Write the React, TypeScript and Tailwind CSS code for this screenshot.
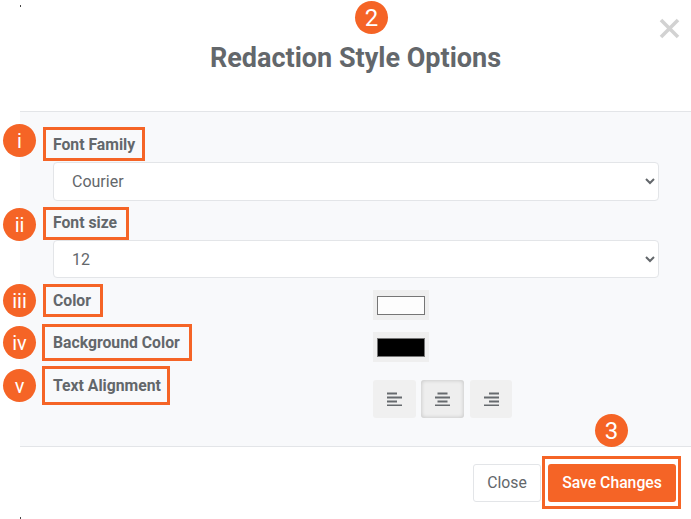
import React from "react";

function Badge({ text, className }: { text: string; className: string }) {
  return (
    <span className={"absolute flex h-[33px] w-[33px] items-center justify-center rounded-full bg-[#f56426] text-white " + className}>
      {text}
    </span>
  );
}

function AlignIcon({ lines }: { lines: [number, number][] }) {
  return (
    <svg width="15" height="14" viewBox="0 0 15 14" className="block">
      {lines.map(([x, w], i) => (
        <rect key={i} x={x} y={i * 4 + 0.5} width={w} height="2" fill="#666a6e" />
      ))}
    </svg>
  );
}

function Tick({ className }: { className: string }) {
  return <span className={"absolute h-[2px] w-[1px] bg-[#444] " + className} />;
}

export default function App() {
  return (
    <div className="relative h-[519px] w-[691px] overflow-hidden bg-white font-['Roboto',sans-serif] text-[#63676b]">
      <Tick className="left-[20px] top-[5px]" />
      <Tick className="left-[20px] top-[517px]" />

      <div className="ml-[20px]">
        {/* Header */}
        <header className="relative flex h-[112px] items-start justify-center border-b border-[#e3e5e8] pt-[41px]">
          <h1 className="text-[27px] leading-[35px] font-bold text-[#63676b]">Redaction Style Options</h1>
          <Badge text="2" className="left-[335px] top-[1px] text-[24px]" />
          <svg width="21" height="21" viewBox="0 0 21 21" className="absolute left-[639px] top-[18px]">
            <path d="M2 2 L19 19 M19 2 L2 19" stroke="#d2d2d2" strokeWidth="3.6" />
          </svg>
        </header>

        {/* Body */}
        <main className="relative h-[334px] bg-[#f8f9fb] pl-[33px] pr-[32px]">
          <div className="relative h-[50px] pt-[22px]">
            <label className="block text-[15.75px] leading-[22px] font-bold">Font Family</label>
            <span className="absolute left-[-10px] top-[15px] h-[34px] w-[102px] border-[3px] border-[#f56426]" />
            <Badge text="i" className="left-[-50px] top-[12px] text-[20px]" />
          </div>
          <select className="block h-[39px] w-[606px] rounded-[4px] border border-[#e3e5e8] bg-white pl-[14px] text-[16px] text-[#63676b]">
            <option>Courier</option>
          </select>
          <div className="relative h-[39px] pt-[11px]">
            <label className="block text-[15.75px] leading-[22px] font-bold">Font size</label>
            <span className="absolute left-[-10px] top-[6px] h-[33px] w-[86px] border-[3px] border-[#f56426]" />
            <Badge text="ii" className="left-[-50px] top-[7px] text-[20px]" />
          </div>
          <select className="block h-[38px] w-[606px] rounded-[4px] border border-[#e3e5e8] bg-white pl-[14px] text-[16px] text-[#63676b]">
            <option>12</option>
          </select>

          <div className="relative mt-[12px] flex h-[30px] items-start">
            <label className="mt-[1px] block w-[320px] text-[15.75px] leading-[20px] font-bold">Color</label>
            <div className="flex h-[30px] w-[56px] items-center justify-center bg-[#efefef]">
              <span className="block h-[19px] w-[48px] border border-[#767676] bg-[#fdfdfd]" />
            </div>
            <span className="absolute left-[-10px] top-[-6px] h-[33px] w-[60px] border-[3px] border-[#f56426]" />
            <Badge text="iii" className="left-[-50px] top-[-6px] text-[20px]" />
          </div>

          <div className="relative mt-[12px] flex h-[30px] items-start">
            <label className="mt-[1px] block w-[320px] text-[15.75px] leading-[20px] font-bold">Background Color</label>
            <div className="flex h-[30px] w-[56px] items-center justify-center bg-[#efefef]">
              <span className="block h-[19px] w-[48px] border border-[#767676] bg-black" />
            </div>
            <span className="absolute left-[-11px] top-[-8px] h-[37px] w-[150px] border-[3px] border-[#f56426]" />
            <Badge text="iv" className="left-[-50px] top-[-6px] text-[20px]" />
          </div>

          <div className="relative mt-[18px] flex items-start">
            <label className="-mt-[4px] block w-[320px] text-[15.75px] leading-[20px] font-bold">Text Alignment</label>
            <div className="flex">
              <button className="flex h-[38px] w-[43px] items-center justify-center rounded-[3px] bg-[#f0f0f0]">
                <AlignIcon lines={[[0, 10], [0, 15], [0, 10], [0, 15]]} />
              </button>
              <button className="ml-[5px] flex h-[38px] w-[43px] items-center justify-center rounded-[3px] bg-[#eeeeee] shadow-[inset_0_0_4px_rgba(0,0,0,0.2)]">
                <AlignIcon lines={[[2.5, 10], [0, 15], [2.5, 10], [0, 15]]} />
              </button>
              <button className="ml-[6px] flex h-[38px] w-[42px] items-center justify-center rounded-[3px] bg-[#f0f0f0]">
                <AlignIcon lines={[[5, 10], [0, 15], [5, 10], [0, 15]]} />
              </button>
            </div>
            <span className="absolute left-[-11px] top-[-14px] h-[39px] w-[128px] border-[3px] border-[#f56426]" />
            <Badge text="v" className="left-[-50px] top-[-11px] text-[20px]" />
          </div>
        </main>

        {/* Footer */}
        <footer className="relative flex h-[73px] items-start justify-end gap-[7px] border-t border-[#e3e5e8] pt-[17px] pr-[15px]">
          <button className="h-[38px] w-[68px] rounded-[3px] border border-[#e3e5e8] bg-white text-[15.75px] text-[#63676b]">Close</button>
          <button className="h-[38px] w-[128px] rounded-[3px] bg-[#f56426] text-[15.75px] font-medium text-white">Save Changes</button>
          <span className="absolute left-[522px] top-[9px] h-[53px] w-[139px] border-[3px] border-[#f56426]" />
          <Badge text="3" className="left-[575px] top-[-33px] text-[24px]" />
        </footer>
      </div>
    </div>
  );
}
